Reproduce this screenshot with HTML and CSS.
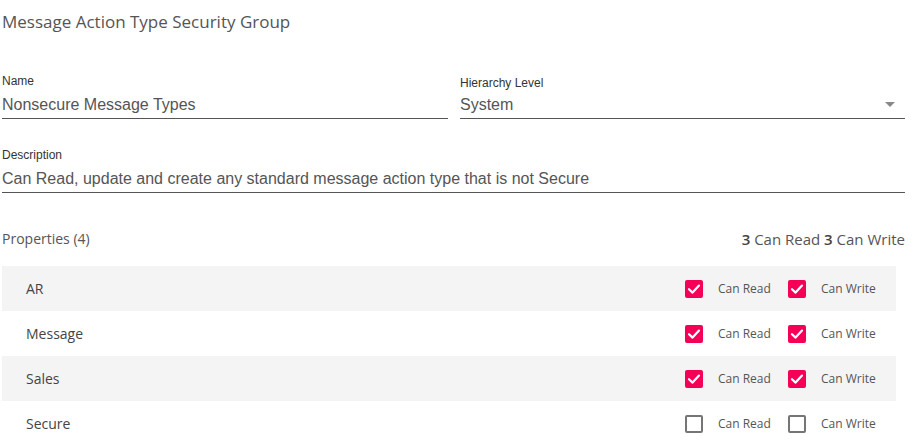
FILE: index.html
```html
<!DOCTYPE html>
<html>
<head>
<meta charset="utf-8">
<link rel="stylesheet" href="styles.css">
</head>
<body>
<div class="page">
  <h1 class="title">Message Action Type Security Group</h1>
  <div class="form-row">
    <div class="field">
      <label class="field-label">Name</label>
      <div class="field-value">Nonsecure Message Types</div>
    </div>
    <div class="field field-select">
      <label class="field-label">Hierarchy Level</label>
      <div class="field-value">System<span class="caret"></span></div>
    </div>
  </div>
  <div class="field field-desc">
    <label class="field-label">Description</label>
    <div class="field-value">Can Read, update and create any standard message action type that is not Secure</div>
  </div>
  <div class="props-head">
    <span>Properties (4)</span>
    <span class="totals"><b>3</b> Can Read <b>3</b> Can Write</span>
  </div>
  <div class="props">
    <div class="prop-row alt">
      <span class="prop-name">AR</span>
      <div class="checks">
        <span class="check"><span class="box on"><svg viewBox="0 0 18 18"><polyline points="4,9.2 7.6,12.6 14,5.6"/></svg></span><span class="check-label">Can Read</span></span>
        <span class="check"><span class="box on"><svg viewBox="0 0 18 18"><polyline points="4,9.2 7.6,12.6 14,5.6"/></svg></span><span class="check-label">Can Write</span></span>
      </div>
    </div>
    <div class="prop-row">
      <span class="prop-name">Message</span>
      <div class="checks">
        <span class="check"><span class="box on"><svg viewBox="0 0 18 18"><polyline points="4,9.2 7.6,12.6 14,5.6"/></svg></span><span class="check-label">Can Read</span></span>
        <span class="check"><span class="box on"><svg viewBox="0 0 18 18"><polyline points="4,9.2 7.6,12.6 14,5.6"/></svg></span><span class="check-label">Can Write</span></span>
      </div>
    </div>
    <div class="prop-row alt">
      <span class="prop-name">Sales</span>
      <div class="checks">
        <span class="check"><span class="box on"><svg viewBox="0 0 18 18"><polyline points="4,9.2 7.6,12.6 14,5.6"/></svg></span><span class="check-label">Can Read</span></span>
        <span class="check"><span class="box on"><svg viewBox="0 0 18 18"><polyline points="4,9.2 7.6,12.6 14,5.6"/></svg></span><span class="check-label">Can Write</span></span>
      </div>
    </div>
    <div class="prop-row">
      <span class="prop-name">Secure</span>
      <div class="checks">
        <span class="check"><span class="box"></span><span class="check-label">Can Read</span></span>
        <span class="check"><span class="box"></span><span class="check-label">Can Write</span></span>
      </div>
    </div>
  </div>
</div>
</body>
</html>
```

FILE: styles.css
```css
* { box-sizing: border-box; }
html, body { margin: 0; padding: 0; background: #fff; }
body { width: 913px; height: 446px; overflow: hidden; }
.page { padding: 0 8px 0 2px; }
.title {
  margin: 0;
  padding-top: 11px;
  font-family: "Open Sans", sans-serif;
  font-weight: 400;
  font-size: 17px;
  line-height: 22px;
  color: #555;
}
.form-row {
  display: grid;
  grid-template-columns: 446px 1fr;
  column-gap: 12px;
  margin-top: 41px;
}
.field { display: flex; flex-direction: column; }
.field-label {
  font-family: "Liberation Sans", Arial, sans-serif;
  font-size: 12px;
  line-height: 14px;
  color: #333;
}
.field-value {
  margin-top: 7px;
  font-family: "Liberation Sans", Arial, sans-serif;
  font-size: 16px;
  line-height: 20px;
  color: #555;
  padding-bottom: 3px;
  border-bottom: 1px solid #555;
  position: relative;
}
.field-select .field-label { padding-top: 2px; }
.field-select .field-value { margin-top: 5px; }
.caret {
  position: absolute;
  right: 10px;
  top: 7px;
  width: 0;
  height: 0;
  border-left: 5px solid transparent;
  border-right: 5px solid transparent;
  border-top: 5px solid #888;
}
.field-desc { margin-top: 29px; }
.props-head {
  display: flex;
  justify-content: space-between;
  align-items: center;
  margin-top: 36px;
  height: 20px;
  font-family: "Open Sans", sans-serif;
  font-size: 14px;
  line-height: 20px;
  color: #555;
}
.totals { font-size: 15px; }
.totals b { font-weight: 600; color: #444; }
.props { margin-top: 17px; margin-right: 9px; }
.prop-row {
  display: flex;
  align-items: center;
  justify-content: space-between;
  height: 45px;
  padding-left: 24px;
  padding-right: 5px;
  font-family: "Open Sans", sans-serif;
  font-size: 14px;
  color: #444;
}
.prop-row.alt { background: #f4f4f4; }
.checks { display: flex; }
.check { display: flex; align-items: center; width: 103px; }
.box {
  width: 18px;
  height: 18px;
  border: 2px solid #757575;
  border-radius: 2px;
  margin-right: 15px;
  display: flex;
  background: #fff;
}
.box.on { background: #f50057; border-color: #f50057; }
.box svg { width: 18px; height: 18px; margin: -2px; }
.box polyline { fill: none; stroke: #fff; stroke-width: 2.2; stroke-linecap: round; stroke-linejoin: round; }
.check-label {
  font-family: "Open Sans", sans-serif;
  font-size: 12px;
  color: #555;
}
```
